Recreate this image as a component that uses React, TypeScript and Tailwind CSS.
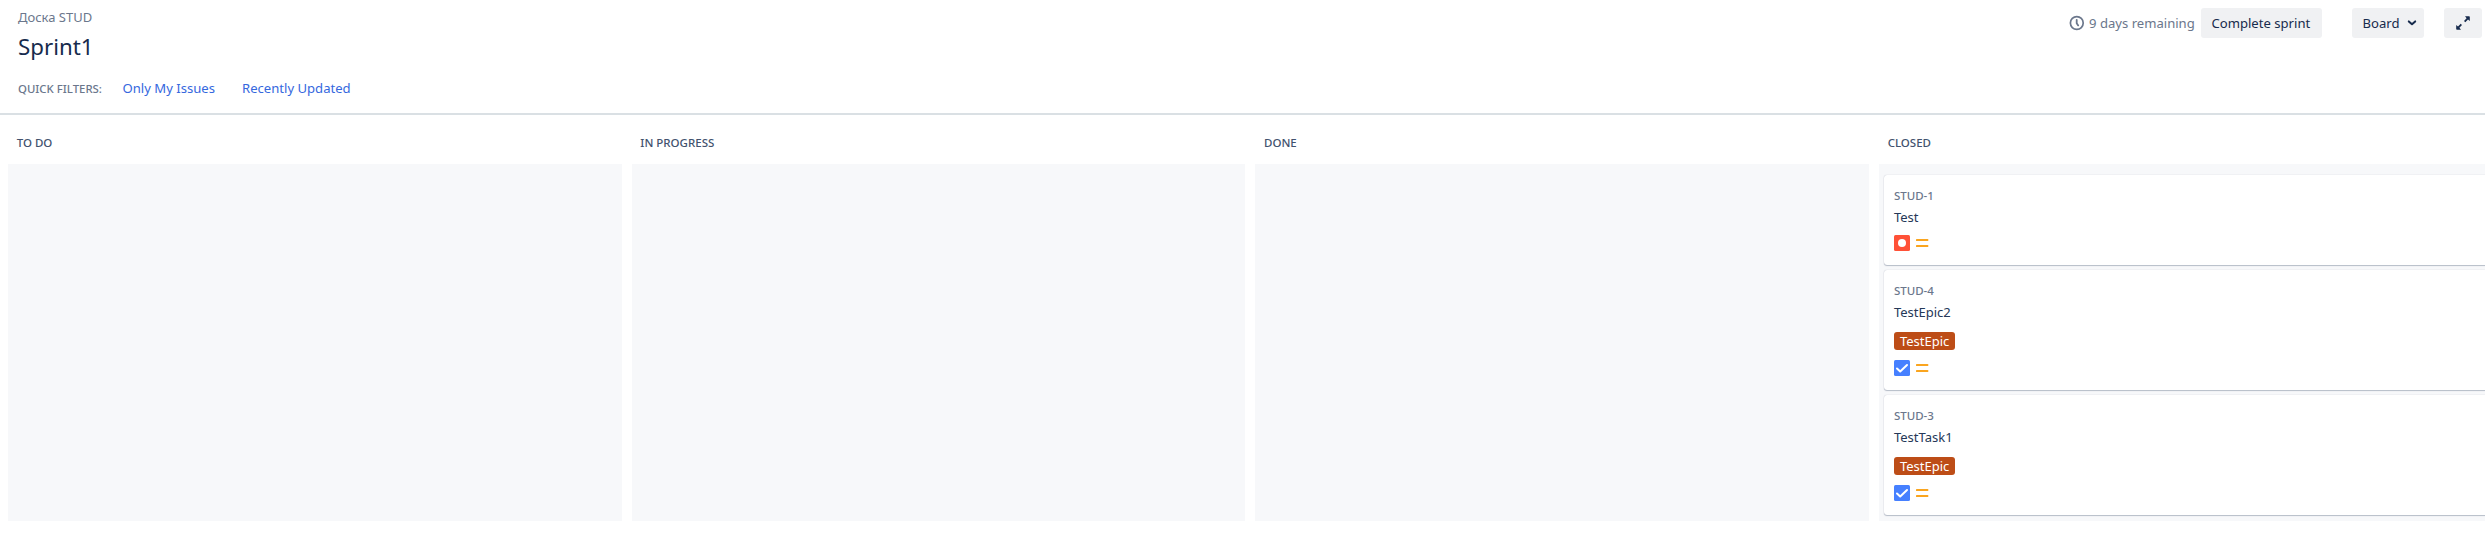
type Issue = { id: string; title: string; type: "bug" | "task"; epic?: string };

const issues: Issue[] = [
  { id: "STUD-1", title: "Test", type: "bug" },
  { id: "STUD-4", title: "TestEpic2", type: "task", epic: "TestEpic" },
  { id: "STUD-3", title: "TestTask1", type: "task", epic: "TestEpic" },
];

const columns: { name: string; issues: Issue[] }[] = [
  { name: "TO DO", issues: [] },
  { name: "IN PROGRESS", issues: [] },
  { name: "DONE", issues: [] },
  { name: "CLOSED", issues },
];

function TypeIcon({ type }: { type: Issue["type"] }) {
  return type === "bug" ? (
    <svg width="16" height="16" viewBox="0 0 16 16">
      <rect width="16" height="16" rx="1.5" fill="#ff5137" />
      <circle cx="8" cy="8" r="4" fill="#fff" />
    </svg>
  ) : (
    <svg width="16" height="16" viewBox="0 0 16 16">
      <rect width="16" height="16" rx="1.5" fill="#4680ff" />
      <path d="M3 8.5 6.2 11.5 13 5" fill="none" stroke="#fff" strokeWidth="2" strokeLinecap="round" strokeLinejoin="round" />
    </svg>
  );
}

function MediumPriority() {
  return (
    <svg width="16" height="16" viewBox="0 0 16 16">
      <rect x="2" y="4" width="12.3" height="2" rx="0.6" fill="#faa51f" />
      <rect x="2" y="10" width="12.3" height="2" rx="0.6" fill="#faa51f" />
    </svg>
  );
}

function Card({ issue }: { issue: Issue }) {
  return (
    <article className="rounded-[3px] bg-white px-2.5 pt-[11px] pb-[14px] shadow-[0_1px_1px_rgba(9,30,66,0.25),0_0_1px_rgba(9,30,66,0.28)]">
      <p className="text-[11.5px] leading-5 font-medium text-[#6b778c]">{issue.id}</p>
      <p className="mt-px text-[13px] leading-5 text-[#253858]">{issue.title}</p>
      {issue.epic && (
        <div className="mt-2.5 flex">
          <span className="h-[18px] w-[61px] rounded-[3px] bg-[#bd4d17] pl-1.5 text-[13px] leading-[18px] text-white">{issue.epic}</span>
        </div>
      )}
      <div className={`flex gap-1 ${issue.epic ? "mt-2.5" : "mt-2"}`}>
        <TypeIcon type={issue.type} />
        <MediumPriority />
      </div>
    </article>
  );
}

export default function App() {
  return (
    <div className="h-[539px] w-full overflow-hidden bg-white font-['Noto_Sans',sans-serif] text-[13.1px] text-[#172b4d]">
      <header className="flex h-[115px] justify-between border-b-2 border-[#dae0e4] pl-[18px]">
        <div className="pt-[7px]">
          <p className="text-[13px] leading-5 text-[#6b778c]">Доска STUD</p>
          <h1 className="mt-1 text-[22.3px] leading-8">Sprint1</h1>
          <div className="mt-[15px] flex items-start leading-5">
            <span className="w-[104.5px] pt-px text-[11.4px] leading-5 font-medium text-[#6b778c]">QUICK FILTERS:</span>
            <a className="w-[119.5px] text-[#3568de]">Only My Issues</a>
            <a className="text-[#3568de]">Recently Updated</a>
          </div>
        </div>
        <div className="mt-2 flex h-[30px] items-center pr-[3px]">
          <svg className="mr-1 shrink-0" width="16" height="16" viewBox="0 0 16 16" fill="none" stroke="#6b778c">
            <circle cx="7.8" cy="8" r="6.4" strokeWidth="1.7" />
            <path d="M7.7 4.8v3.4l1.5 2.2" strokeWidth="1.8" strokeLinecap="round" strokeLinejoin="round" />
          </svg>
          <span className="w-[112px] leading-[30px] whitespace-nowrap text-[#6b778c]">9 days remaining</span>
          <button className="h-[30px] w-[121px] rounded-[3px] bg-[#f0f1f3] pl-[10.5px] text-left leading-[30px]">Complete sprint</button>
          <button className="ml-[30px] flex h-[30px] w-[72px] items-center rounded-[3px] bg-[#f0f1f3] pl-[10.5px] leading-[30px]">
            <span className="w-[44.5px] text-left">Board</span>
            <svg width="10" height="8" viewBox="0 0 10 8" fill="none" stroke="#172b4d" strokeWidth="2">
              <path d="M1.8 2.4 5 5.3 8.2 2.4" strokeLinecap="round" strokeLinejoin="round" />
            </svg>
          </button>
          <button className="ml-5 flex h-[30px] w-[38px] items-center justify-center rounded-[3px] bg-[#f0f1f3]">
            <svg width="14" height="14" viewBox="0 0 14 14" fill="#172b4d">
              <path d="M9 0.3H13a.8.8 0 0 1 .8.8v4L12 3.6 9.3 6.2 8 4.9 10.6 2.2z" />
              <path d="M5 13.7H1a.8.8 0 0 1-.8-.8V8.9L2 10.4 4.7 7.8 6 9.1 3.4 11.8z" />
            </svg>
          </button>
        </div>
      </header>
      <main className="grid w-[2492.6px] grid-cols-4 gap-x-2.5 pl-2">
        {columns.map((column) => (
          <section key={column.name}>
            <h2 className="h-[49px] pt-[18px] pl-[8.7px] text-[11.5px] leading-5 font-medium text-[#42526e]">{column.name}</h2>
            <div className="flex h-[357px] flex-col gap-[5px] bg-[#f7f8fa] px-[5px] pt-[11px]">
              {column.issues.map((issue) => (
                <Card key={issue.id} issue={issue} />
              ))}
            </div>
          </section>
        ))}
      </main>
    </div>
  );
}
